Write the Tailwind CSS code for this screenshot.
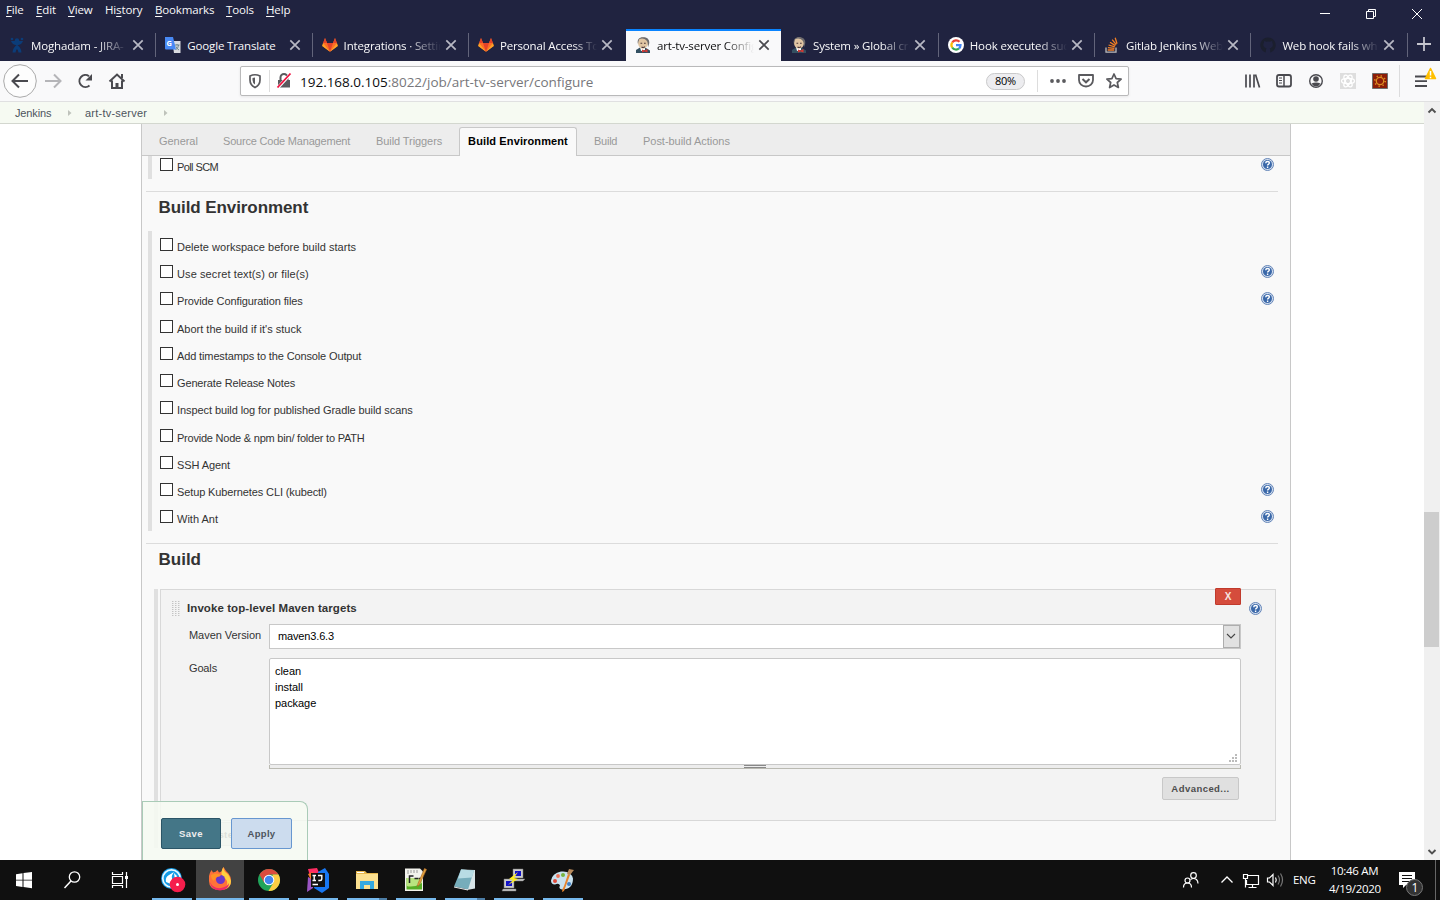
<!DOCTYPE html>
<html lang="en">
<head>
<meta charset="utf-8">
<title>art-tv-server Config [Jenkins]</title>
<script src="https://cdn.jsdelivr.net/npm/@tailwindcss/browser@4"></script>
</head>
<body class="flex h-[900px] w-[1440px] flex-col overflow-hidden bg-white font-['Liberation_Sans',Arial,sans-serif] text-[11px] text-[#333]">
<svg class="hidden">
  <symbol id="x" viewBox="0 0 16 16"><path d="M3.300 3.300l9.400 9.400M12.700 3.300l-9.400 9.400" fill="none" stroke="currentColor" stroke-width="1.700"/></symbol>
  <symbol id="fox" viewBox="0 0 16 16"><path d="M8 14.800L.3 9 3 .9 5 6h6l2-5.100L15.700 9z" fill="#fc6d26"/><path d="M8 14.800L5 6h6z" fill="#e24329"/><path d="M5 6L3 .9 1 6zM11 6l2-5.100L15 6z" fill="#e24329"/><path d="M1 6L.2 9l7.800 5.800zM15 6l.8 3L8 14.800z" fill="#fca326"/></symbol>
  <symbol id="butler" viewBox="0 0 16 16"><path d="M1 16v-3l4-2.500 6 .5 4 2.500V16z" fill="#335061"/><path d="M5 10l1 4 4-1V9z" fill="#fff"/><ellipse cx="8" cy="6" rx="5" ry="5.800" fill="#e0c5a3"/><path d="M3 7C1.800 3 4 .3 8 .3S14.300 2 14.300 6l-1.300 4.500c-.2-3.500 0-5.500-1.500-7C8.500 1.200 5 1.500 3.800 4z" fill="#6d6b6d"/><path d="M4 2.400C6 .9 10 1.200 11 3.500c-1 2-6 1-7.500 3z" fill="#e0c5a3"/><path d="M5.500 6.200h1.700M9 6.200h1.700M6.500 10q1.800 1 3.500-.2" stroke="#49363a" stroke-width="1.100" fill="none"/><path d="M7 12.500l2.500 1 3-1.500v3.500l-3-1-2.500 1z" fill="#d33833"/></symbol>
  <symbol id="help" viewBox="0 0 13 13"><circle cx="6.500" cy="6.500" r="6" fill="#d3deee" stroke="#6485b8" stroke-width="1"/><circle cx="6.500" cy="6.500" r="4.500" fill="#3a68a9"/><path d="M4.700 5.200q.1-1.700 1.900-1.700t1.700 1.500q0 .8-.9 1.300t-.8 1.200M6.600 8.600v1.300" fill="none" stroke="#fff" stroke-width="1.400"/></symbol>
</svg>

<header class="flex h-[61px] shrink-0 flex-col bg-[#202340] font-['Open_Sans',sans-serif] text-[11.5px] tracking-[-0.15px] text-[#f9f9fa]">
  <div class="flex h-[29px] justify-between">
    <nav class="flex h-5 items-center pl-1.5 decoration-1 [&_u]:underline-offset-2">
      <span class="w-[30px]"><u>F</u>ile</span><span class="w-8"><u>E</u>dit</span><span class="w-[37px]"><u>V</u>iew</span><span class="w-[50px]">Hi<u>s</u>tory</span><span class="w-[71px]"><u>B</u>ookmarks</span><span class="w-10"><u>T</u>ools</span><span><u>H</u>elp</span>
    </nav>
    <div class="flex h-[29px] items-center gap-9 pr-[18px]">
      <svg class="-mt-0.5 h-2.5 w-2.5" viewBox="0 0 10 10"><path d="M0 4.500h10" stroke="#fff"/></svg>
      <svg class="-mt-0.5 h-2.5 w-2.5" viewBox="0 0 10 10"><path d="M.5 2.500h7v7h-7zM2.500 2.500v-2h7v7h-2" fill="none" stroke="#fff"/></svg>
      <svg class="-mt-0.5 h-2.5 w-2.5" viewBox="0 0 10 10"><path d="M0 0l10 10M10 0L0 10" stroke="#fff"/></svg>
    </div>
  </div>
  <div class="flex h-8">
    <div class="flex w-[156.300px] shrink-0 items-center pr-2.5 pl-[9px]">
      <svg class="h-4 w-4 shrink-0" viewBox="0 0 16 16"><g fill="#0b3c78"><circle cx="8" cy="3.500" r="2.200"/><circle cx="3" cy="2" r="1.300"/><circle cx="13" cy="2" r="1.300"/></g><path d="M2 4q1 3.500 6 4.500Q13 7.500 14 4M8 8q-4 2-4.500 7.500h3Q7 12.500 8 12q1 .5 1.500 3.500h3Q12 10 8 8" fill="#0b3c78"/></svg>
      <span class="mt-px ml-1.5 w-[97px] overflow-hidden whitespace-nowrap [mask-image:linear-gradient(90deg,#000_68%,transparent)]">Moghadam - JIRA-</span>
      <svg class="ml-0.5 h-4 w-4 text-[#b8b9c4]"><use href="#x"/></svg>
    </div>
    <div class="flex w-[156.300px] shrink-0 items-center pl-[9px]">
      <svg class="h-4 w-4 shrink-0" viewBox="0 0 16 16"><path d="M7 4h8.500v12H9z" fill="#d9dbe0"/><path d="M9.500 8h5M12 7v1M10.500 13q3-2 3-5M11 9.500q1 2.500 3 3.500" stroke="#5f7b83" stroke-width=".9" fill="none"/><path d="M0 0h8l3 12.500H1Q0 12.500 0 11.500z" fill="#4889f4"/><text x="1.500" y="9" font-size="7.500" font-weight="700" fill="#fff">G</text></svg>
      <span class="mt-px ml-1.5 w-[98px] overflow-hidden whitespace-nowrap">Google Translate</span>
      <svg class="ml-0.5 h-4 w-4 text-[#b8b9c4]"><use href="#x"/></svg>
    </div>
    <div class="flex w-[156.300px] shrink-0 items-center pl-[9px]">
      <svg class="h-4 w-4 shrink-0"><use href="#fox"/></svg>
      <span class="mt-px ml-1.5 w-[97px] overflow-hidden whitespace-nowrap [mask-image:linear-gradient(90deg,#000_65%,transparent)]">Integrations · Setting</span>
      <svg class="ml-0.5 h-4 w-4 text-[#b8b9c4]"><use href="#x"/></svg>
    </div>
    <div class="flex w-[156.300px] shrink-0 items-center pl-[9px]">
      <svg class="h-4 w-4 shrink-0"><use href="#fox"/></svg>
      <span class="mt-px ml-1.5 w-[97px] overflow-hidden whitespace-nowrap [mask-image:linear-gradient(90deg,#000_75%,transparent)]">Personal Access Tok</span>
      <svg class="ml-0.5 h-4 w-4 text-[#b8b9c4]"><use href="#x"/></svg>
    </div>
    <div class="ml-[0.8px] flex w-[155px] shrink-0 items-center border-t-2 border-[#0a84ff] bg-[#f9f9fa] pl-[9px] text-[#0c0c0d]">
      <svg class="-mt-0.5 h-4 w-4 shrink-0"><use href="#butler"/></svg>
      <span class="-mt-px ml-1.5 w-[97px] overflow-hidden whitespace-nowrap [mask-image:linear-gradient(90deg,#000_70%,transparent)]">art-tv-server Config</span>
      <svg class="-mt-0.5 ml-0.5 h-4 w-4 text-[#4a4a4f]"><use href="#x"/></svg>
    </div>
    <div class="flex w-[156.800px] shrink-0 items-center pl-2.5">
      <svg class="h-4 w-4 shrink-0"><use href="#butler"/></svg>
      <span class="mt-px ml-1.5 w-[97px] overflow-hidden whitespace-nowrap [mask-image:linear-gradient(90deg,#000_70%,transparent)]">System » Global cre</span>
      <svg class="ml-0.5 h-4 w-4 text-[#b8b9c4]"><use href="#x"/></svg>
    </div>
    <div class="flex w-[156.300px] shrink-0 items-center pl-2.5">
      <svg class="h-4 w-4 shrink-0" viewBox="0 0 16 16"><circle cx="8" cy="8" r="8" fill="#fff"/><g fill="none" stroke-width="2.200"><path d="M4.200 5.500A4.600 4.600 0 0 1 11.500 4.800" stroke="#ea4335"/><path d="M4.200 5.500a4.600 4.600 0 0 0 0 5" stroke="#fbbc05"/><path d="M4.200 10.500a4.600 4.600 0 0 0 6.800 1" stroke="#34a853"/><path d="M11 11.500a4.500 4.500 0 0 0 1.500-3.300H8" stroke="#4285f4"/></g></svg>
      <span class="mt-px ml-1.5 w-[97px] overflow-hidden whitespace-nowrap [mask-image:linear-gradient(90deg,#000_70%,transparent)]">Hook executed suc</span>
      <svg class="ml-0.5 h-4 w-4 text-[#b8b9c4]"><use href="#x"/></svg>
    </div>
    <div class="flex w-[156.300px] shrink-0 items-center pl-2.5">
      <svg class="h-4 w-4 shrink-0" viewBox="0 0 16 16"><path d="M2 10.500v4.700h10v-4.700" fill="none" stroke="#bcbbbb" stroke-width="1.300"/><path d="M3.700 13h6.600M3.900 10.700l6.500.7M4.600 8l6.200 1.900M6 5.200l5.400 3.400M8.200 2.700l4 5M11.200.8l1.800 6" stroke="#f48024" stroke-width="1.300"/></svg>
      <span class="mt-px ml-1.5 w-[97px] overflow-hidden whitespace-nowrap [mask-image:linear-gradient(90deg,#000_70%,transparent)]">Gitlab Jenkins Web</span>
      <svg class="ml-0.5 h-4 w-4 text-[#b8b9c4]"><use href="#x"/></svg>
    </div>
    <div class="flex w-[156.300px] shrink-0 items-center pl-2.5">
      <svg class="h-4 w-4 shrink-0" viewBox="0 0 16 16"><path d="M5.800 15.500A7.700 7.700 0 1 1 10.200 15.500V12.800q0-1.200-.6-1.600 3.300-.4 3.300-3.600 0-1.100-.7-1.900.3-.9-.1-1.800-.9 0-2 .8-2-.6-4 0-1.200-.8-2-.8-.4 1-.1 1.800-.7.800-.7 1.900 0 3.200 3.300 3.600-.5.400-.6 1.300z" fill="#1b1f2e"/></svg>
      <span class="mt-px ml-1.5 w-[97px] overflow-hidden whitespace-nowrap [mask-image:linear-gradient(90deg,#000_70%,transparent)]">Web hook fails wh</span>
      <svg class="ml-0.5 h-4 w-4 text-[#b8b9c4]"><use href="#x"/></svg>
    </div>
    <svg class="mt-[7px] ml-[9px] h-4 w-4 shrink-0" viewBox="0 0 16 16"><path d="M8 1v14M1 8h14" stroke="#c5c5ce" stroke-width="1.800"/></svg>
  </div>
  <svg class="pointer-events-none absolute top-[33px] left-0 h-6 w-[1440px]"><path d="M155.500 0v24M312.500 0v24M468.500 0v24M938.500 0v24M1094.500 0v24M1250.500 0v24M1407.500 0v24" stroke="#62647a"/></svg>
</header>

<section class="flex h-[41px] shrink-0 items-center border-b border-[#e0e0e1] bg-[#f9f9fa] font-['Open_Sans',sans-serif]">
  <svg class="h-10 w-[140px] shrink-0" viewBox="0 0 140 40" fill="none" stroke="#4a4a4f" stroke-width="2"><circle cx="20" cy="20" r="16.300" fill="#fdfdfd" stroke="#aaa" stroke-width="1"/><path d="M28 20H13M19 13.500L12.500 20l6.500 6.500"/><path d="M45 20h15M54 13.500l6.500 6.500-6.500 6.500" stroke="#b5b5b8"/><path d="M89.500 24.500A6 6 0 1 1 89 15.200"/><path d="M92 13v6.500h-6.500z" fill="#4a4a4f" stroke="none"/><path d="M109.500 20.500l7.500-7 7.500 7M112 19.500V27h10v-7.500M122 13v4"/><path d="M117 28v-6" stroke-width="3"/></svg>
  <div class="ml-[100px] flex h-[30px] w-[889px] shrink-0 items-center rounded-[2px] border border-[#b9b9ba] bg-white shadow-[0_1px_3px_rgba(0,0,0,0.08)]">
    <svg class="h-7 w-[59px] shrink-0" viewBox="0 0 59 28" fill="none"><path d="M9 9q5-2.500 10 0v4q0 5-5 7.500-5-2.500-5-7.500z" stroke="#5a5a5e" stroke-width="1.700"/><path d="M14 10.500v7q-2.500-1.500-2.500-4.500v-2z" fill="#5a5a5e"/><path d="M28.500 3v22" stroke="#ddd"/><path d="M37 13h12v7.500H37z" fill="#5a5a5e"/><path d="M39.500 13v-2.500a3.500 3.500 0 0 1 7 0V13" stroke="#5a5a5e" stroke-width="2"/><path d="M37 20.500L49.500 7" stroke="#fff" stroke-width="3.200"/><path d="M36.500 20.500L49.500 6.500" stroke="#f0103f" stroke-width="1.800"/></svg>
    <span class="mt-0.5 grow text-[13.500px] tracking-[-0.01px] text-[#77777b]"><span class="text-[#0c0c0d]">192.168.0.105</span>:8022/job/art-tv-server/configure</span>
    <span class="flex h-[17px] w-[39px] items-center justify-center rounded-full border border-[#c9c9ca] bg-[#ededf0] pt-px text-[11px] tracking-[-0.3px] text-black">80%</span>
    <svg class="h-7 w-[103px] shrink-0" viewBox="0 0 103 28" fill="none"><path d="M12.500 3v22" stroke="#ddd"/><g fill="#5a5a5e"><circle cx="27" cy="14" r="1.900"/><circle cx="33" cy="14" r="1.900"/><circle cx="39" cy="14" r="1.900"/></g><path d="M54 8h14v5a7 6.500 0 0 1-14 0z" stroke="#5a5a5e" stroke-width="1.800" stroke-linejoin="round"/><path d="M57.500 12l3.500 3.300 3.500-3.300" stroke="#5a5a5e" stroke-width="2"/><path d="M89 7l2.100 4.600 5 .5-3.800 3.400 1.100 5-4.400-2.600-4.400 2.600 1.100-5-3.800-3.400 5-.5z" stroke="#5a5a5e" stroke-width="1.700" stroke-linejoin="round"/></svg>
  </div>
  <svg class="ml-[101px] h-10 w-[210px] shrink-0" viewBox="0 0 210 40" fill="none" stroke="#4a4a4f" stroke-width="2"><path d="M16 13.500v13M20 13.500v13M24 13.500v13M25.500 13.500l4 13" stroke-width="1.700"/><rect x="47" y="14" width="14" height="11.500" rx="2" stroke-width="1.800"/><path d="M54 14v12" stroke-width="1.500"/><path d="M49 17h3M49 19.500h3M49 22h3" stroke-width="1"/><circle cx="86" cy="20" r="6.300" stroke-width="1.400"/><circle cx="86" cy="18" r="2.800" fill="#4a4a4f" stroke="none"/><path d="M81.500 22.500q4.500-2 9 0-1.500 2.800-4.500 2.800t-4.500-2.800z" fill="#4a4a4f" stroke="none"/><g stroke-width="1"><path d="M110 12h16v16h-16z" fill="#dedede" stroke="none"/><g stroke="#fff" stroke-width="1.300"><ellipse cx="118" cy="20" rx="6.500" ry="2.600"/><ellipse cx="118" cy="20" rx="6.500" ry="2.600" transform="rotate(60 118 20)"/><ellipse cx="118" cy="20" rx="6.500" ry="2.600" transform="rotate(120 118 20)"/></g><path d="M142.500 12.500h15v15h-15z" fill="#8c1d08" stroke="#6d6d6d"/><circle cx="150" cy="20" r="3.700" stroke="#dd8d22" stroke-width="1.300"/><circle cx="150" cy="20" r="5.200" stroke="#dd8d22" stroke-width="1.600" stroke-dasharray="1.300 2.784"/><path d="M169.500 4v32" stroke="#dcdcdd"/></g><path d="M185 15.500h12M185 20.200h12M185 25h12" stroke-width="1.800"/><path d="M200.500 7.500l5 10h-10z" fill="#ffbf00" stroke="#ffbf00" stroke-width="1.500" stroke-linejoin="round"/><path d="M200.500 10v4.500M200.500 15.800v1.500" stroke="#fff" stroke-width="1.500"/></svg>
</section>

<div class="flex h-[758px] shrink-0">
  <div class="flex w-[1424px] flex-col">
    <nav class="flex h-[22px] shrink-0 items-center border-b border-[#d3d7cf] bg-[#f6faf2] pl-[15px] text-[11px] text-[#4d545d]">
      <span class="mt-0.5 w-[52px] tracking-[-0.15px]">Jenkins</span><span class="w-[18px]"><svg class="h-1.5 w-1.5" viewBox="0 0 6 6"><path d="M1 0l3.500 3L1 6z" fill="#bfc3bb"/></svg></span><span class="mt-0.5 w-[78px] tracking-[0.22px]">art-tv-server</span><svg class="h-1.5 w-1.5" viewBox="0 0 6 6"><path d="M1 0l3.500 3L1 6z" fill="#bfc3bb"/></svg>
    </nav>
    <main class="relative ml-[141px] flex h-[736px] w-[1150px] flex-col border-x border-[#c8c8c8] bg-[#f9f9f9]">
      <nav class="flex h-8 shrink-0 items-end border-b border-[#c8c8c8] bg-[#ededed] text-[#999]">
        <span class="ml-[17px] w-16 pb-1.5 tracking-[-0.05px]">General</span><span class="w-[153px] pb-1.5 tracking-[-0.2px]">Source Code Management</span><span class="w-[83px] pb-1.5 tracking-[-0.08px]">Build Triggers</span>
        <span class="-mb-px flex h-[29px] w-[118px] items-center justify-center rounded-t-[3px] border border-b-0 border-[#c8c8c8] bg-[#f9f9f9] pb-px font-bold tracking-[0.12px] text-black">Build Environment</span>
        <span class="ml-[17px] w-[49px] pb-1.5 tracking-[-0.25px]">Build</span><span class="pb-1.5 tracking-[-0.03px]">Post-build Actions</span>
      </nav>
      <div class="ml-1.5 flex h-[23px] shrink-0 border-l-4 border-[#e0e0e0] pt-0.5 pl-2">
        <span class="h-[13px] w-[13px] border border-[#333] bg-white"></span><span class="mt-0.5 ml-1 grow leading-[15px] tracking-[-0.6px]">Poll SCM</span><svg class="mr-4 h-[13px] w-[13px]"><use href="#help"/></svg>
      </div>
      <section class="mt-3 mr-3 ml-1 border-t border-[#dcdcdc]">
        <h2 class="pt-1.5 pl-[12.500px] text-[17px] leading-5 font-bold tracking-[-0.08px]">Build Environment</h2>
        <div class="mt-[12.600px] mb-[0.400px] ml-0.5 grid h-[300px] grid-rows-11 border-l-4 border-[#e0e0e0] pl-2">
          <label class="flex items-center"><span class="h-[13px] w-[13px] border border-[#333] bg-white"></span><span class="mt-[5.800px] ml-1 grow tracking-[0.03px]">Delete workspace before build starts</span></label>
          <label class="flex items-center"><span class="h-[13px] w-[13px] border border-[#333] bg-white"></span><span class="mt-[5.300px] ml-1 grow tracking-[0.1px]">Use secret text(s) or file(s)</span><svg class="mr-1 h-[13px] w-[13px]"><use href="#help"/></svg></label>
          <label class="flex items-center"><span class="h-[13px] w-[13px] border border-[#333] bg-white"></span><span class="mt-[5.300px] ml-1 grow tracking-[-0.1px]">Provide Configuration files</span><svg class="mr-1 h-[13px] w-[13px]"><use href="#help"/></svg></label>
          <label class="flex items-center"><span class="h-[13px] w-[13px] border border-[#333] bg-white"></span><span class="mt-[5.800px] ml-1 grow">Abort the build if it's stuck</span></label>
          <label class="flex items-center"><span class="h-[13px] w-[13px] border border-[#333] bg-white"></span><span class="mt-[5.800px] ml-1 grow tracking-[-0.13px]">Add timestamps to the Console Output</span></label>
          <label class="flex items-center"><span class="h-[13px] w-[13px] border border-[#333] bg-white"></span><span class="mt-[5.300px] ml-1 grow tracking-[-0.14px]">Generate Release Notes</span></label>
          <label class="flex items-center"><span class="h-[13px] w-[13px] border border-[#333] bg-white"></span><span class="mt-[5.300px] ml-1 grow tracking-[-0.08px]">Inspect build log for published Gradle build scans</span></label>
          <label class="flex items-center"><span class="h-[13px] w-[13px] border border-[#333] bg-white"></span><span class="mt-[5.800px] ml-1 grow tracking-[-0.22px]">Provide Node &amp; npm bin/ folder to PATH</span></label>
          <label class="flex items-center"><span class="h-[13px] w-[13px] border border-[#333] bg-white"></span><span class="mt-[5.300px] ml-1 grow tracking-[-0.1px]">SSH Agent</span></label>
          <label class="flex items-center"><span class="h-[13px] w-[13px] border border-[#333] bg-white"></span><span class="mt-[5.300px] ml-1 grow tracking-[-0.12px]">Setup Kubernetes CLI (kubectl)</span><svg class="mr-1 h-[13px] w-[13px]"><use href="#help"/></svg></label>
          <label class="flex items-center"><span class="h-[13px] w-[13px] border border-[#333] bg-white"></span><span class="mt-[5.300px] ml-1 grow">With Ant</span><svg class="mr-1 h-[13px] w-[13px]"><use href="#help"/></svg></label>
        </div>
      </section>
      <section class="mt-3 mr-3 ml-1 border-t border-[#dcdcdc]">
        <h2 class="pt-1.5 pl-[12.500px] text-[17px] leading-5 font-bold">Build</h2>
        <div class="mt-[19px] ml-2 h-[259px] border-l-4 border-[#e0e0e0] pl-0.5">
          <div class="relative h-[232px] w-[1116px] border border-[#d8d8d8] bg-[#f3f3f3]">
            <div class="flex h-[34px] items-center pt-1 pl-[11px]">
              <svg class="mr-[7px] h-[15px] w-2" viewBox="0 0 8 15"><path d="M.5 0v15M3.500 0v15M6.500 0v15" stroke="#c4c4c4" stroke-dasharray="1 1"/><path d="M1.500 0v15M4.500 0v15M7.500 0v15" stroke="#dedede" stroke-dasharray="1 1"/></svg>
              <b class="grow text-[11.500px] tracking-[0.08px]">Invoke top-level Maven targets</b>
              <svg class="-mt-px mr-[13.500px] h-[13px] w-[13px]"><use href="#help"/></svg>
            </div>
            <div class="flex h-[25px]">
              <span class="w-[108px] pt-[3px] pl-7 tracking-[-0.05px]">Maven Version</span>
              <div class="flex h-[25px] w-[972px] border border-[#c8c8c8] bg-white text-black"><span class="grow self-center pl-2 tracking-[-0.15px]">maven3.6.3</span><span class="flex h-[23px] w-[17px] items-center justify-center border border-[#adadad] bg-[#e1e1e1]"><svg class="mr-px h-2 w-2.5" viewBox="0 0 10 8"><path d="M1 2l4 4 4-4" fill="none" stroke="#444" stroke-width="1.100"/></svg></span></div>
            </div>
            <div class="mt-[9px] flex">
              <span class="w-[108px] pt-0.5 pl-7 tracking-[-0.15px]">Goals</span>
              <div class="w-[972px]">
                <div class="flex h-[107px] items-end justify-between rounded-[2px] border border-[#c8c8c8] bg-white pt-1 pr-[3px] pb-[5px] pl-[5px] leading-4 text-black"><p class="self-start tracking-[-0.05px]">clean<br>install<br>package</p><svg class="-mb-[3px] h-2 w-2" viewBox="0 0 8 8"><path d="M6 0h2v2H6zM3 3h2v2H3zM6 3h2v2H6zM0 6h2v2H0zM3 6h2v2H3zM6 6h2v2H6z" fill="#bbb"/></svg></div>
                <div class="flex h-1 justify-center border-x border-b border-[#babab2] bg-[#ededed]"><span class="h-[3px] w-[22px] border-y border-[#888]"></span></div>
              </div>
            </div>
            <div class="mt-2 mr-9 flex justify-end"><button class="h-[23px] w-[77px] rounded-[2px] border border-[#c8c8c8] bg-[#e0e0e0] pt-0.5 text-[9.500px] font-bold tracking-[0.450px] text-[#4d4d4d]">Advanced...</button></div>
            <button class="absolute -top-0.5 right-[34px] h-[17px] w-[26px] rounded-[1px] border border-[#c03a2c] bg-[#d54c3c] pt-0.5 text-[10px] leading-none font-bold text-[#f7e3e0]">X</button>
          </div>
          <button class="mt-px h-6 w-[104px] rounded-[2px] border border-[#c8c8c8] bg-[#e0e0e0] pt-0.5 pl-[7px] text-left text-[9.500px] font-bold tracking-[0.400px] whitespace-nowrap text-[#4d4d4d]">Add build step</button>
        </div>
      </section>
      <div class="absolute bottom-0 -left-px ml-px flex h-[59px] w-[166px] gap-2.5 rounded-tr-[8px] border border-b-0 border-[#a9cbb7] bg-[#f6faf2]/85 pt-4 pl-[18px]">
        <button class="h-[31px] w-[60px] rounded-[2px] border border-[#2b5567] bg-[#447687] pt-0.5 text-[9.500px] font-bold tracking-[0.450px] text-[#eee]">Save</button>
        <button class="h-[31px] w-[61px] rounded-[2px] border border-[#6797d0] bg-[#ccdcee] pt-0.5 text-[9.500px] font-bold tracking-[0.3px] text-[#4d545d]">Apply</button>
      </div>
    </main>
  </div>
  <div class="flex w-4 flex-col bg-[#f0f0f0]">
    <svg class="mt-[5px] ml-[2.500px] h-2 w-2.5" viewBox="0 0 10 8"><path d="M1.500 5.500L5 2l3.500 3.500" fill="none" stroke="#505050" stroke-width="1.900"/></svg>
    <div class="mt-[397px] h-[135px] w-[15px] bg-[#cdcdcd]"></div>
    <svg class="mt-[201px] ml-[2.500px] h-2 w-2.5" viewBox="0 0 10 8"><path d="M1.500 2L5 5.500 8.500 2" fill="none" stroke="#505050" stroke-width="1.900"/></svg>
  </div>
</div>

<footer class="flex h-10 shrink-0 bg-[#101010] font-['Open_Sans',sans-serif] text-white">
  <svg class="h-10 w-[147px] shrink-0" viewBox="0 0 147 40" fill="none" stroke="#fff"><path d="M16 14.200l6.500-1v6.500H16zM23.500 13.100l8.500-1.200v7.800h-8.500zM16 20.500h6.500V27L16 26zM23.500 20.500H32v7.700l-8.500-1.200z" fill="#fff" stroke="none"/><circle cx="74.500" cy="17" r="5.200" stroke-width="1.300"/><path d="M71 21l-6.500 7" stroke-width="1.500"/><path d="M112.500 12v2.500h10V12M112.500 16.500h10v7h-10zM112.500 28v-2.500h10V28M126.500 12v16" stroke-width="1.200"/><path d="M125 16h3v3h-3z" fill="#fff" stroke="none"/></svg>
  <div class="flex w-[49px] flex-col items-center justify-end"><svg class="mb-0.5 h-8 w-9" viewBox="0 0 36 32"><circle cx="17.500" cy="14.500" r="10.500" fill="#139ce6"/><circle cx="17.500" cy="14.500" r="8.700" fill="none" stroke="#e9f8ff" stroke-width="1.700"/><path d="M12 18q-1-5 3-7l5-3q-3 4-2 6 1 3-1 6zM20 9l3 3-2 4z" fill="#fff"/><circle cx="23.500" cy="20.500" r="7.800" fill="#f51e4c"/><circle cx="23.500" cy="20.500" r="1.500" fill="#fff"/></svg><i class="h-0.5 w-10 bg-[#76b9ed]"></i></div>
  <div class="flex w-12 flex-col items-center justify-end bg-[#424242]"><svg class="mb-0.5 h-8 w-9" viewBox="0 0 36 32"><path d="M7 12q.5-3 2.500-6l1.500 2.500q3-.5 4.500-2.500l1.500 2.500 2.500-1q.5-3 2-4.500 2 4 5 6.500 2.500 3 2.500 7 0 9.500-11 9.500Q7 26 7 17z" fill="#ff7139"/><path d="M21.500 3q0 4 3 6t4.500 8q0 6-6 8 3-4 2-8-1-3-5-5-1.500-4 1.500-9z" fill="#ffcf3f"/><path d="M8 18q3 7 11 6 6-1 8-5 0 7-9 7.500-9-.5-10-8.500z" fill="#ed2a68"/><circle cx="18.500" cy="15.500" r="4.500" fill="#6a37c9"/><path d="M9 11q4-2.500 7-1l3 1q-1 2-4 2-2 1-3 4-3-2-3-6z" fill="#ff9225"/></svg><i class="h-0.5 w-12 bg-[#76b9ed]"></i></div>
  <div class="flex w-[49px] flex-col items-center justify-end"><svg class="mb-0.5 h-8 w-9" viewBox="0 0 36 32"><circle cx="18" cy="16" r="11" fill="#20a45b"/><path d="M8.500 10.500A11 11 0 0 1 27.500 10.500H18l-4.800 8.200z" fill="#db4b3d"/><path d="M27.500 10.500A11 11 0 0 1 17.500 27l5-8.500-1-8z" fill="#fdcd44"/><circle cx="18" cy="16" r="5.300" fill="#fff"/><circle cx="18" cy="16" r="4.300" fill="#4285ee"/></svg><i class="h-0.5 w-10 bg-[#76b9ed]"></i></div>
  <div class="flex w-[49px] flex-col items-center justify-end"><svg class="mb-0.5 h-8 w-9" viewBox="0 0 36 32"><path d="M8 5l9-1 4 9-8 10z" fill="#fe2d62"/><path d="M8 13l6 3-1 8-6 4z" fill="#9b55c4"/><path d="M18 8l7-4 4 6v14l-7 5-8-5z" fill="#1877f2"/><path d="M8 10l5-2-2 8z" fill="#f97a25"/><path d="M11 9h14v14H11z" fill="#111"/><path d="M12.500 11.500h3.500M14.200 11.500v5M12.500 16.500h3.500M18 11.500h3.800v3.500q0 1.500-1.800 1.500h-1.700M12.500 20.500h5.500" stroke="#fff" stroke-width="1.400" fill="none"/></svg><i class="h-0.5 w-10 bg-[#76b9ed]"></i></div>
  <div class="flex w-[49px] flex-col items-center justify-end"><svg class="mb-0.5 h-8 w-9" viewBox="0 0 36 32"><path d="M7 7h9l2 2h11v16H7z" fill="#e6b74d"/><path d="M8 8h7v1H8z" fill="#fff"/><path d="M7 10h22v15H7z" fill="#fbe090"/><path d="M11 25v-8h14v8h-4v-4h-6v4z" fill="#35a9e0"/></svg><i class="flex h-0.5 w-10 justify-end bg-[#76b9ed]"><b class="h-0.5 w-2 bg-[#4d7ea6]"></b></i></div>
  <div class="flex w-[49px] flex-col items-center justify-end"><svg class="mb-0.5 h-8 w-9" viewBox="0 0 36 32"><path d="M7 4.500h15l3 3V27H7z" fill="#f3f3ed"/><path d="M8.500 14h15.500v11.500H8.500z" fill="#56ad25"/><path d="M8.500 14h15.500v5q-8 5-15.500 3z" fill="#b9e480"/><path d="M11.500 19v-7h4M16.500 14.500h4M21 14.500h3" stroke="#222" stroke-width="1.500" fill="none"/><path d="M10 6v4M13 6v3M16 6v3M19 6v3" stroke="#999"/><path d="M26.500 4.500l2 1-7 15-2 2 .5-3z" fill="#e3a43c" stroke="#ae6a2c" stroke-width=".7"/></svg><i class="h-0.5 w-10 bg-[#76b9ed]"></i></div>
  <div class="flex w-[49px] flex-col items-center justify-end"><svg class="mb-0.5 h-8 w-9" viewBox="0 0 36 32"><path d="M14 5.500l14 .5V24.500l-8 1.500z" fill="#d8e5e8"/><path d="M14 5.500l13 1-6 19-14-3z" fill="#76adbb"/><path d="M14 5.500l13 1-2 7-14 1z" fill="#b8dce4"/><path d="M7 22.500l14 3v1L7 23.500z" fill="#eee"/></svg><i class="flex h-0.5 w-10 justify-end bg-[#76b9ed]"><b class="h-0.5 w-2 bg-[#4d7ea6]"></b></i></div>
  <div class="flex w-[49px] flex-col items-center justify-end"><svg class="mb-0.5 h-8 w-9" viewBox="0 0 36 32"><path d="M17 5h10v9H17zM18 15h11l-2 2H17zM8 15h10v9H8zM7 25h13v2H6z" fill="#ccc" stroke="#777" stroke-width=".5"/><path d="M19 7h6v5h-6zM10 17h6v5h-6z" fill="#1212c8"/><path d="M22 8l-9 7 4 1-5 5 10-6-4-1z" fill="#ffee1d"/></svg><i class="h-0.5 w-10 bg-[#76b9ed]"></i></div>
  <div class="flex w-[49px] flex-col items-center justify-end"><svg class="mb-0.5 h-8 w-9" viewBox="0 0 36 32"><path d="M16 7.500q10-1 12 7 0 11-11 11-4-1-2-4-1-3-5-1-4 0-4-4 1-7 10-9z" fill="#c9e2ef"/><circle cx="10" cy="17" r="2" fill="#df4a3a"/><circle cx="13" cy="12" r="1.900" fill="#ef7458"/><circle cx="18" cy="11" r="2" fill="#76b53f"/><circle cx="24" cy="20" r="2" fill="#3f7fc4"/><path d="M23 10l2 1-6 16-2 1q0-3 2-6z" fill="#e6842d"/><path d="M22 10l2-5 5 1-4 5z" fill="#b88a5c"/></svg><i class="h-0.5 w-10 bg-[#76b9ed]"></i></div>
  <svg class="ml-[593px] h-10 w-[105px] shrink-0" viewBox="0 0 105 40" fill="none" stroke="#fff" stroke-width="1.200"><circle cx="13.500" cy="15.500" r="2.800"/><path d="M10.500 19.500q3-2 6 0 1.500 1.500 1.500 4"/><circle cx="7.500" cy="20.500" r="2.500"/><path d="M3.500 27.500q0-4.500 4-4.500t4 4.500"/><path d="M41.500 22.500l5.500-5.500 5.500 5.500" stroke-width="1.300"/><path d="M67 15.500h11.500v9H66.500V20M72.500 25v3M68.500 27.500h8M63.500 14.500h4v4h-4zM65.500 18.500v9"/><path d="M87.500 18h2l3.500-3.500v11L89.500 22h-2z"/><path d="M95.500 17.500q1.500 2.500 0 5"/><path d="M98 15.500q3 4.500 0 9M100.500 13.500q4 6.500 0 13" stroke="#777"/></svg>
  <span class="ml-2 w-9 shrink-0 self-center text-[11.500px] tracking-[-0.3px]">ENG</span>
  <div class="w-[51px] shrink-0 pt-0.5 text-center text-[11.500px] leading-[18px] tracking-[-0.300px] whitespace-nowrap"><p>10:46 AM</p><p>4/19/2020</p></div>
  <svg class="ml-4 h-10 w-8 shrink-0" viewBox="0 0 32 40"><path d="M3 12h16v13h-9l-3 3v-3H3z" fill="#fff"/><path d="M6 15.500h10M6 18.500h10M6 21.500h7" stroke="#111"/><circle cx="18.500" cy="27.500" r="8" fill="#333" stroke="#777"/><text x="15.500" y="32" font-size="12" fill="#fff">1</text></svg>
  <i class="mr-1 ml-auto h-10 w-px shrink-0 bg-[#666]"></i>
</footer>
</body>
</html>
